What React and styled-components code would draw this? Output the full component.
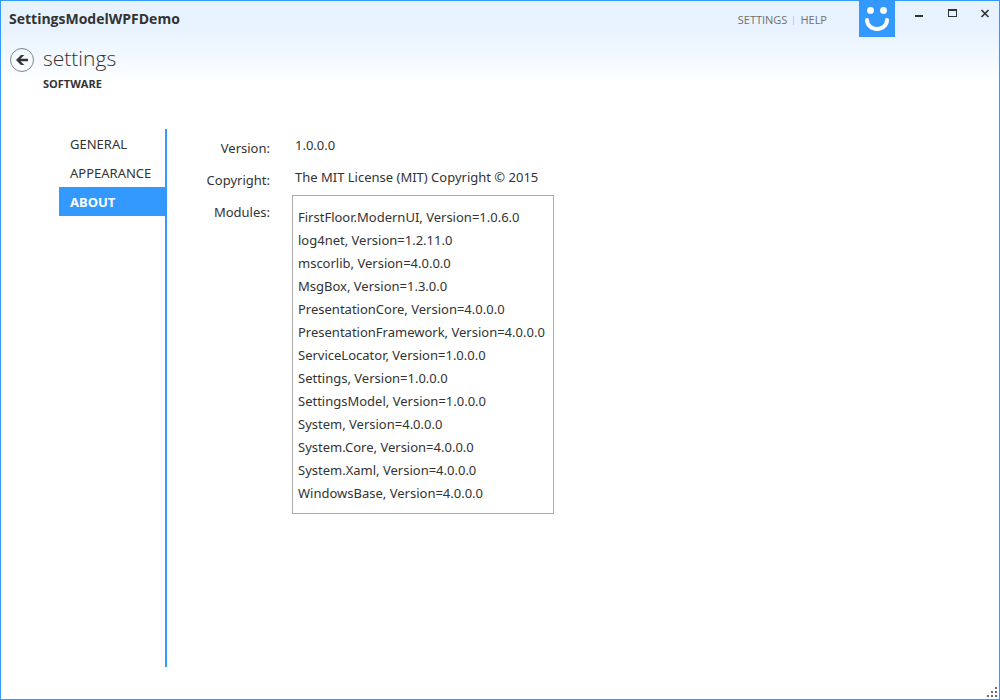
import React from "react";
import styled, { createGlobalStyle } from "styled-components";

const accent = "#3399ff";
const ink = "#333333";

const GlobalStyle = createGlobalStyle`
  *, *::before, *::after { box-sizing: border-box; }
  body {
    margin: 0;
    font-family: "Noto Sans", "Open Sans", sans-serif;
    font-size: 13px;
    line-height: 20px;
    color: ${ink};
  }
  button { font: inherit; color: inherit; background: none; border: 0; padding: 0; }
`;

const Window = styled.div`
  position: relative;
  display: flex;
  flex-direction: column;
  min-height: 100vh;
  border: 1px solid ${accent};
  background: linear-gradient(#e6f2ff 0, #e9f3ff 30px, #ffffff 84px) #ffffff;
`;

const TitleBar = styled.header`
  display: flex;
  align-items: flex-start;
  height: 47px;
  padding-left: 8px;
`;

const AppTitle = styled.div`
  flex: 1;
  padding-top: 8px;
  font-family: "Open Sans", "Noto Sans", sans-serif;
  font-size: 14px;
  font-weight: 700;
`;

const TitleLinks = styled.nav`
  display: flex;
  align-items: center;
  padding-top: 9px;
  margin-right: 32px;
`;

const TitleLink = styled.a`
  font-family: "Open Sans", "Noto Sans", sans-serif;
  font-size: 11px;
  color: #707070;
  text-decoration: none;
  & + & {
    display: flex;
    align-items: center;
  }
  & + &::before {
    content: "";
    width: 1px;
    height: 9px;
    margin: 0 6px;
    background: #c8ccd2;
  }
`;

const Logo = styled.svg`
  display: block;
  width: 36px;
  height: 36px;
  background: ${accent};
`;

const WindowControls = styled.div`
  display: flex;
  gap: 5px;
  padding-left: 10px;
`;

const WindowButton = styled.button`
  width: 28px;
  height: 24px;
  svg { display: block; }
`;

const PageHeader = styled.div`
  display: grid;
  grid-template-columns: 24px 1fr;
  column-gap: 9px;
  padding-left: 9px;
`;

const BackButton = styled.button`
  width: 24px;
  height: 24px;
  svg { display: block; }
`;

const PageTitle = styled.h1`
  margin: 0;
  font-family: "Open Sans", "Noto Sans", sans-serif;
  font-size: 21px;
  font-weight: 300;
  line-height: 20px;
`;

const PageSection = styled.h2`
  grid-column: 2;
  margin: 2px 0 0;
  font-family: "Open Sans", "Noto Sans", sans-serif;
  font-size: 11px;
  font-weight: 700;
  line-height: 20px;
`;

const Body = styled.div`
  flex: 1;
  display: flex;
  padding: 35px 32px 32px 58px;
`;

const Sidebar = styled.nav`
  flex: 0 0 108px;
  border-right: 2px solid ${accent};
`;

const SideLink = styled.a`
  display: block;
  padding: 2px 0 0 11px;
  line-height: 27px;
  text-decoration: none;
  font-weight: ${(p) => (p.$active ? 700 : 400)};
  color: ${(p) => (p.$active ? "#ffffff" : ink)};
  background: ${(p) => (p.$active ? accent : "transparent")};
`;

const Details = styled.dl`
  flex: 1;
  display: grid;
  grid-template-columns: 103px 1fr;
  grid-template-rows: 32px 32px auto;
  align-content: start;
  column-gap: 22px;
  margin: 0;
  padding-top: 2px;
`;

const Label = styled.dt`
  padding-top: 7px;
  text-align: right;
`;

const Value = styled.dd`
  margin: 0;
  padding: 4px 0 0 3px;
`;

const ModulesCell = styled.dd`
  margin: 0;
`;

const ModuleList = styled.ul`
  width: fit-content;
  min-width: 262px;
  margin: 0;
  padding: 10px 5px 8px;
  list-style: none;
  line-height: 23px;
  border: 1px solid #ababab;
  background: #ffffff;
`;

const ResizeGrip = styled.svg`
  position: absolute;
  right: 2px;
  bottom: 2px;
`;

const sections = ["GENERAL", "APPEARANCE", "ABOUT"];

const modules = [
  ["FirstFloor.ModernUI", "1.0.6.0"],
  ["log4net", "1.2.11.0"],
  ["mscorlib", "4.0.0.0"],
  ["MsgBox", "1.3.0.0"],
  ["PresentationCore", "4.0.0.0"],
  ["PresentationFramework", "4.0.0.0"],
  ["ServiceLocator", "1.0.0.0"],
  ["Settings", "1.0.0.0"],
  ["SettingsModel", "1.0.0.0"],
  ["System", "4.0.0.0"],
  ["System.Core", "4.0.0.0"],
  ["System.Xaml", "4.0.0.0"],
  ["WindowsBase", "4.0.0.0"],
];

export default function App() {
  return (
    <>
      <GlobalStyle />
      <Window>
        <TitleBar>
          <AppTitle>SettingsModelWPFDemo</AppTitle>
          <TitleLinks>
            <TitleLink href="#settings">SETTINGS</TitleLink>
            <TitleLink href="#help">HELP</TitleLink>
          </TitleLinks>
          <Logo viewBox="0 0 36 36" aria-hidden="true">
            <circle cx="11.5" cy="9.4" r="3.4" fill="#fff" />
            <circle cx="24.5" cy="9.4" r="3.4" fill="#fff" />
            <path d="M8 19a10 9 0 0 0 20 0" fill="none" stroke="#fff" strokeWidth="4" strokeLinecap="round" />
          </Logo>
          <WindowControls>
            <WindowButton aria-label="Minimize">
              <svg width="28" height="24"><path d="M10 14h8v2h-8z" fill={ink} /></svg>
            </WindowButton>
            <WindowButton aria-label="Maximize">
              <svg width="28" height="24"><path fillRule="evenodd" d="M10 8h9v8h-9zM11 10v5h7v-5z" fill={ink} /></svg>
            </WindowButton>
            <WindowButton aria-label="Close">
              <svg width="28" height="24"><path d="M10.5 9l7 7M17.5 9l-7 7" stroke={ink} strokeWidth="1.7" /></svg>
            </WindowButton>
          </WindowControls>
        </TitleBar>

        <PageHeader>
          <BackButton aria-label="Back">
            <svg width="24" height="24" viewBox="0 0 24 24">
              <circle cx="12" cy="12" r="11.5" fill="none" stroke="#858585" />
              <path d="M6 12l5-5h3.3l-3.8 3.8H18v2.4h-7.5l3.8 3.8H11z" fill={ink} />
            </svg>
          </BackButton>
          <PageTitle>settings</PageTitle>
          <PageSection>SOFTWARE</PageSection>
        </PageHeader>

        <Body>
          <Sidebar>
            {sections.map((name) => (
              <SideLink key={name} href={`#${name.toLowerCase()}`} $active={name === "ABOUT"}>
                {name}
              </SideLink>
            ))}
          </Sidebar>
          <Details>
            <Label>Version:</Label>
            <Value>1.0.0.0</Value>
            <Label>Copyright:</Label>
            <Value>The MIT License (MIT) Copyright © 2015</Value>
            <Label>Modules:</Label>
            <ModulesCell>
              <ModuleList>
                {modules.map(([name, version]) => (
                  <li key={name}>{`${name}, Version=${version}`}</li>
                ))}
              </ModuleList>
            </ModulesCell>
          </Details>
        </Body>

        <ResizeGrip width="10" height="10" aria-hidden="true">
          <path
            d="M8 0h2v2h-2zM4 4h2v2h-2zM8 4h2v2h-2zM0 8h2v2h-2zM4 8h2v2h-2zM8 8h2v2h-2z"
            fill="#6a6a6a"
          />
        </ResizeGrip>
      </Window>
    </>
  );
}
